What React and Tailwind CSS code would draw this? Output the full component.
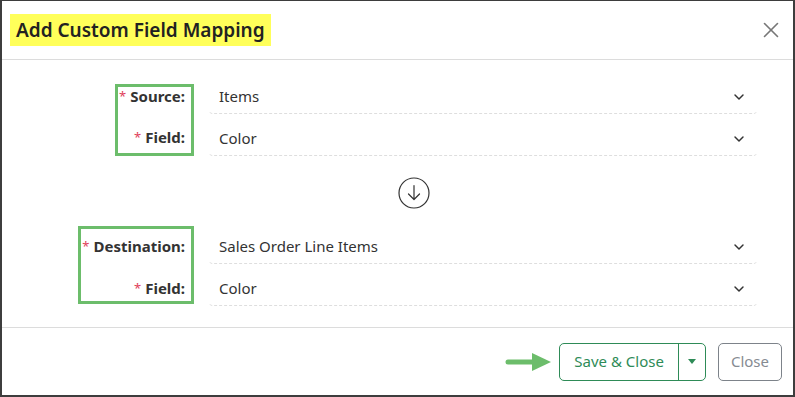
import { X, ChevronDown } from 'lucide-react';

const font = { fontFamily: '"Segoe UI", "Noto Sans", sans-serif' };

function SelectBox({ value }) {
  return (
    <div className="h-[34px] flex items-center justify-between pl-[10px] pr-[10px] border-b border-dashed border-[#dedede] rounded-b-[4px]">
      <span className="text-[15px] text-[#333]">{value}</span>
      <ChevronDown className="w-[16px] h-[16px] text-[#333]" strokeWidth={2.2} />
    </div>
  );
}

function Label({ text }) {
  return (
    <div className="h-[18px] leading-[18px] flex items-center justify-end text-[15px] font-bold text-[#333] whitespace-nowrap">
      <span className="text-[#e0405a] text-[13px] mr-[4px] font-normal">*</span>
      {text}
    </div>
  );
}

export default function App() {
  return (
    <div className="w-[795px] h-[397px] bg-white border-x-2 border-b-2 border-t border-[#3d3d3d] flex flex-col" style={font}>
      <div className="h-[59px] flex items-center justify-between pl-[8px] pr-[9px] border-b border-[#dcdcdc]">
        <div className="h-[32px] bg-[#ffff5a] px-[6px] flex items-center">
          <span className="text-[19px] font-semibold text-[#222]">Add Custom Field Mapping</span>
        </div>
        <X className="w-[26px] h-[26px] text-[#777]" strokeWidth={1.5} />
      </div>

      <div className="flex-1 pt-[20px]">
        <div className="flex items-start">
          <div className="w-[207px] flex justify-end pr-[15px]">
            <div className="mt-[4px] border-[3px] border-[#6cbd6b] pl-[1px] pr-[6px] pt-0 pb-[7px] flex flex-col gap-[23px]">
              <Label text="Source:" />
              <Label text="Field:" />
            </div>
          </div>
          <div className="w-[548px] flex flex-col gap-[8px]">
            <SelectBox value="Items" />
            <SelectBox value="Color" />
          </div>
        </div>

        <div className="h-[74px] flex items-center justify-center pl-[32px]">
          <svg width="32" height="32" viewBox="0 0 32 32" fill="none" stroke="#333" strokeWidth="1.2">
            <circle cx="16" cy="16" r="15" />
            <path d="M16 8.5v14M10.5 17l5.5 5.5 5.5-5.5" strokeLinecap="round" strokeLinejoin="round" />
          </svg>
        </div>

        <div className="flex items-start">
          <div className="w-[207px] flex justify-end pr-[15px]">
            <div className="mt-[-4px] border-[3px] border-[#6cbd6b] pl-[1px] pr-[6px] pt-[8px] pb-[4px] flex flex-col gap-[24px]">
              <Label text="Destination:" />
              <Label text="Field:" />
            </div>
          </div>
          <div className="w-[548px] flex flex-col gap-[8px]">
            <SelectBox value="Sales Order Line Items" />
            <SelectBox value="Color" />
          </div>
        </div>
      </div>

      <div className="h-[68px] border-t border-[#dcdcdc] flex items-center justify-end pr-[11px] gap-[12px]">
        <svg width="50" height="22" viewBox="0 0 50 22" className="mr-[-8px]">
          <path d="M3 11h27" stroke="#6cbd6b" strokeWidth="5" strokeLinecap="round" />
          <path d="M27 2l19 9-19 9z" fill="#6cbd6b" />
        </svg>
        <div className="h-[38px] flex border border-[#2e8b57] rounded-[5px] text-[#2e8b57]">
          <div className="px-[14px] flex items-center text-[15px]">Save &amp; Close</div>
          <div className="w-[27px] border-l border-[#2e8b57] flex items-center justify-center">
            <svg width="8" height="5" viewBox="0 0 8 5"><path d="M0 0h8L4 5z" fill="#2e8b57" /></svg>
          </div>
        </div>
        <div className="h-[38px] px-[12px] flex items-center border border-[#7d838a] rounded-[5px] text-[15px] text-[#868b92]">
          Close
        </div>
      </div>
    </div>
  );
}
